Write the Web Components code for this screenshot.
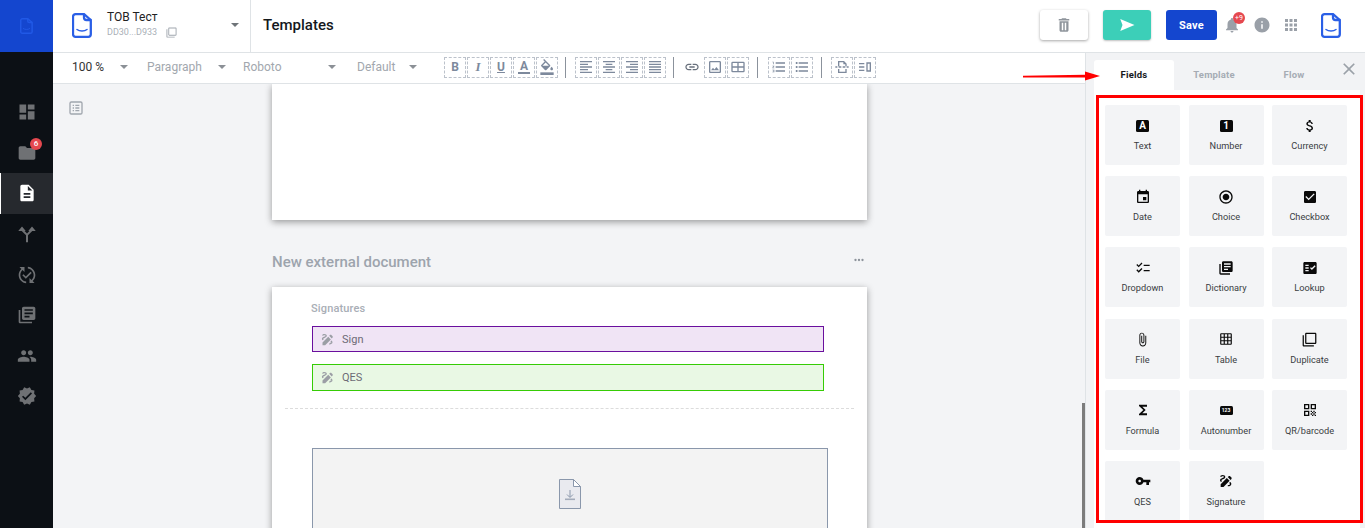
<!DOCTYPE html>
<html lang="en">
<head>
<meta charset="utf-8">
<title>Templates</title>
<style>
  html, body { margin: 0; padding: 0; height: 100%; overflow: hidden; }
  body { font-family: Roboto, "Liberation Sans", sans-serif; }
</style>
</head>
<body>
<app-shell>
  <app-sidebar slot="sidebar"></app-sidebar>
  <app-header slot="header" company="ТОВ Тест" code="DD30...D933" heading="Templates"></app-header>
  <format-toolbar slot="toolbar"></format-toolbar>
  <doc-canvas slot="canvas"></doc-canvas>
  <field-panel slot="panel">
    <field-tile><letter-badge slot="icon">A</letter-badge>Text</field-tile>
    <field-tile><letter-badge slot="icon">1</letter-badge>Number</field-tile>
    <field-tile><ui-icon slot="icon" name="money" size="16"></ui-icon>Currency</field-tile>
    <field-tile><ui-icon slot="icon" name="event" size="16"></ui-icon>Date</field-tile>
    <field-tile><ui-icon slot="icon" name="radio" size="16"></ui-icon>Choice</field-tile>
    <field-tile><ui-icon slot="icon" name="checkbox" size="16"></ui-icon>Checkbox</field-tile>
    <field-tile><ui-icon slot="icon" name="checklist" size="16"></ui-icon>Dropdown</field-tile>
    <field-tile><ui-icon slot="icon" name="library" size="16"></ui-icon>Dictionary</field-tile>
    <field-tile><ui-icon slot="icon" name="factcheck" size="16"></ui-icon>Lookup</field-tile>
    <field-tile><ui-icon slot="icon" name="attach" size="15"></ui-icon>File</field-tile>
    <field-tile><ui-icon slot="icon" name="grid" size="14"></ui-icon>Table</field-tile>
    <field-tile><ui-icon slot="icon" name="duplicate" size="15"></ui-icon>Duplicate</field-tile>
    <field-tile><ui-icon slot="icon" name="sigma" size="16"></ui-icon>Formula</field-tile>
    <field-tile><letter-badge slot="icon" wide>123</letter-badge>Autonumber</field-tile>
    <field-tile><ui-icon slot="icon" name="qr" size="16"></ui-icon>QR/barcode</field-tile>
    <field-tile><ui-icon slot="icon" name="key" size="16"></ui-icon>QES</field-tile>
    <field-tile><ui-icon slot="icon" name="sign" size="16"></ui-icon>Signature</field-tile>
  </field-panel>
</app-shell>

<script>
const ICONS = {
  dashboard: '<path d="M3 13h8V3H3v10zm0 8h8v-6H3v6zm10 0h8V11h-8v10zm0-18v6h8V3h-8z"/>',
  folder: '<path d="M10 4H4c-1.1 0-1.99.9-1.99 2L2 18c0 1.1.9 2 2 2h16c1.1 0 2-.9 2-2V8c0-1.1-.9-2-2-2h-8l-2-2z"/>',
  description: '<path d="M14 2H6c-1.1 0-1.99.9-1.99 2L4 20c0 1.1.89 2 1.99 2H18c1.1 0 2-.9 2-2V8l-6-6zm2 16H8v-2h8v2zm0-4H8v-2h8v2zm-3-5V3.5L18.5 9H13z"/>',
  split: '<path d="M12 22v-9L6.500 7.500M12 13l5.500-5.500" fill="none" stroke="currentColor" stroke-width="2.400"/><path d="M1.500 8.500 6 3l4.500 5.500zM13.500 8.500 18 3l4.500 5.500z"/>',
  sync: '<path d="M17.66 9.53l-7.07 7.07-4.24-4.24 1.41-1.41 2.83 2.83 5.66-5.66 1.41 1.41zM4 12c0-2.33 1.02-4.42 2.62-5.88L9 8.5v-6H3l2.2 2.2C3.24 6.52 2 9.11 2 12c0 5.19 3.95 9.45 9 9.95v-2.02c-3.94-.49-7-3.86-7-7.93zm18 0c0-5.19-3.95-9.45-9-9.95v2.02c3.94.49 7 3.86 7 7.93 0 2.33-1.02 4.42-2.62 5.88L15 15.5v6h6l-2.2-2.2c1.96-1.82 3.2-4.41 3.2-7.3z"/>',
  library: '<path d="M4 6H2v14c0 1.1.9 2 2 2h14v-2H4V6zm16-4H8c-1.1 0-2 .9-2 2v12c0 1.1.9 2 2 2h12c1.1 0 2-.9 2-2V4c0-1.1-.9-2-2-2zm-1 9H9V9h10v2zm-4 4H9v-2h6v2zm4-8H9V5h10v2z"/>',
  people: '<path d="M16 11c1.66 0 2.99-1.34 2.99-3S17.66 5 16 5c-1.66 0-3 1.34-3 3s1.34 3 3 3zm-8 0c1.66 0 2.99-1.34 2.99-3S9.66 5 8 5C6.34 5 5 6.34 5 8s1.34 3 3 3zm0 2c-2.33 0-7 1.17-7 3.5V19h14v-2.5c0-2.33-4.67-3.5-7-3.5zm8 0c-.29 0-.62.02-.97.05 1.16.84 1.97 1.97 1.97 3.45V19h6v-2.5c0-2.33-4.67-3.5-7-3.5z"/>',
  verified: '<path d="M23 12l-2.44-2.78.34-3.68-3.61-.82-1.89-3.18L12 3 8.6 1.54 6.71 4.72l-3.61.81.34 3.68L1 12l2.44 2.78-.34 3.69 3.61.82 1.89 3.18L12 21l3.4 1.46 1.89-3.18 3.61-.82-.34-3.68L23 12zm-13 5l-4-4 1.41-1.41L10 14.17l6.59-6.59L18 9l-8 8z"/>',
  trash: '<path fill-rule="evenodd" d="M6 19c0 1.1.9 2 2 2h8c1.1 0 2-.9 2-2V7H6v12zm3-10h2v10H9V9zm4 0h2v10h-2V9zM19 4h-3.5l-1-1h-5l-1 1H5v2h14V4z"/>',
  send: '<path d="M3 4l19 8-19 8 3-8z"/>',
  bell: '<path d="M12 22c1.1 0 2-.9 2-2h-4c0 1.1.89 2 2 2zm6-6v-5c0-3.07-1.64-5.64-4.5-6.32V4c0-.83-.67-1.5-1.5-1.5s-1.5.67-1.5 1.5v.68C7.63 5.36 6 7.92 6 11v5l-2 2v1h16v-1l-2-2z"/>',
  info: '<path d="M12 2C6.48 2 2 6.48 2 12s4.48 10 10 10 10-4.48 10-10S17.52 2 12 2zm1 15h-2v-6h2v6zm0-8h-2V7h2v2z"/>',
  apps: '<path d="M4 8h4V4H4v4zm6 12h4v-4h-4v4zm-6 0h4v-4H4v4zm0-6h4v-4H4v4zm6 0h4v-4h-4v4zm6-10v4h4V4h-4zm-6 4h4V4h-4v4zm6 6h4v-4h-4v4zm0 6h4v-4h-4v4z"/>',
  copy: '<path d="M3 5H1v16c0 1.1.9 2 2 2h16v-2H3V5zm18-4H7c-1.1 0-2 .9-2 2v14c0 1.1.9 2 2 2h14c1.1 0 2-.9 2-2V3c0-1.1-.9-2-2-2zm0 16H7V3h14v14z"/>',
  duplicate: '<path d="M3 5H1v16c0 1.1.9 2 2 2h16v-2H3V5zm18-4H7c-1.1 0-2 .9-2 2v14c0 1.1.9 2 2 2h14c1.1 0 2-.9 2-2V3c0-1.1-.9-2-2-2zm0 16H7V3h14v14z"/>',
  close: '<path d="M19 6.41L17.59 5 12 10.59 6.41 5 5 6.41 10.59 12 5 17.59 6.41 19 12 13.41 17.59 19 19 17.59 13.41 12z"/>',
  listbox: '<path fill-rule="evenodd" d="M5 2h14a3 3 0 0 1 3 3v14a3 3 0 0 1-3 3H5a3 3 0 0 1-3-3V5a3 3 0 0 1 3-3zm0 2a1 1 0 0 0-1 1v14a1 1 0 0 0 1 1h14a1 1 0 0 0 1-1V5a1 1 0 0 0-1-1H5zm2 3h2v2H7V7zm4 0h6v2h-6V7zm-4 4h2v2H7v-2zm4 0h6v2h-6v-2zm-4 4h2v2H7v-2zm4 0h6v2h-6v-2z"/>',
  dots: '<path d="M6 10a2 2 0 1 0 0 4 2 2 0 0 0 0-4zm12 0a2 2 0 1 0 0 4 2 2 0 0 0 0-4zm-6 0a2 2 0 1 0 0 4 2 2 0 0 0 0-4z"/>',
  fill: '<path d="M16.56 8.94L7.62 0 6.21 1.41l2.38 2.38-5.15 5.15c-.59.59-.59 1.54 0 2.12l5.5 5.5c.29.29.68.44 1.06.44s.77-.15 1.06-.44l5.5-5.5c.59-.58.59-1.53 0-2.12zM5.21 10L10 5.21 14.79 10H5.21zM19 11.5s-2 2.17-2 3.5c0 1.1.9 2 2 2s2-.9 2-2c0-1.33-2-3.5-2-3.5z"/><path d="M2 20h20v4H2z"/>',
  left: '<path d="M15 15H3v2h12v-2zm0-8H3v2h12V7zM3 13h18v-2H3v2zm0 8h18v-2H3v2zM3 3v2h18V3H3z"/>',
  center: '<path d="M7 15v2h10v-2H7zm-4 6h18v-2H3v2zm0-8h18v-2H3v2zm4-6v2h10V7H7zM3 3v2h18V3H3z"/>',
  right: '<path d="M3 21h18v-2H3v2zm6-4h12v-2H9v2zm-6-4h18v-2H3v2zm6-4h12V7H9v2zM3 3v2h18V3H3z"/>',
  justify: '<path d="M3 21h18v-2H3v2zm0-4h18v-2H3v2zm0-4h18v-2H3v2zm0-4h18V7H3v2zm0-6v2h18V3H3z"/>',
  link: '<path d="M3.9 12c0-1.71 1.39-3.1 3.1-3.1h4V7H7c-2.76 0-5 2.24-5 5s2.24 5 5 5h4v-1.9H7c-1.71 0-3.1-1.39-3.1-3.1zM8 13h8v-2H8v2zm9-6h-4v1.9h4c1.71 0 3.1 1.39 3.1 3.1s-1.39 3.1-3.1 3.1h-4V17h4c2.76 0 5-2.24 5-5s-2.24-5-5-5z"/>',
  image: '<path d="M19 5v14H5V5h14m0-2H5c-1.1 0-2 .9-2 2v14c0 1.1.9 2 2 2h14c1.1 0 2-.9 2-2V5c0-1.1-.9-2-2-2zm-4.86 8.86l-3 3.87L9 13.14 6 17h12l-3.86-5.14z"/>',
  tablebox: '<path fill-rule="evenodd" d="M4 4h16a2 2 0 0 1 2 2v12a2 2 0 0 1-2 2H4a2 2 0 0 1-2-2V6a2 2 0 0 1 2-2zm0 2v5h7V6H4zm9 0v5h7V6h-7zM4 13v5h7v-5H4zm9 0v5h7v-5h-7z"/>',
  ordered: '<path d="M2 17h2v.5H3v1h1v.5H2v1h3v-4H2v1zm1-9h1V4H2v1h1v3zm-1 3h1.8L2 13.1v.9h3v-1H3.2L5 10.9V10H2v1zm5-6v2h14V5H7zm0 14h14v-2H7v2zm0-6h14v-2H7v2z"/>',
  bullets: '<path d="M4 10.5c-.83 0-1.5.67-1.5 1.5s.67 1.5 1.5 1.5 1.5-.67 1.5-1.5-.67-1.5-1.5-1.5zm0-6c-.83 0-1.5.67-1.5 1.5S3.17 7.5 4 7.5 5.5 6.83 5.5 6 4.83 4.5 4 4.5zm0 12c-.83 0-1.5.68-1.5 1.5s.68 1.5 1.5 1.5 1.5-.68 1.5-1.5-.67-1.5-1.5-1.5zM7 19h14v-2H7v2zm0-6h14v-2H7v2zm0-8v2h14V5H7z"/>',
  pagebreak: '<path d="M6 3h9l4 4v4h-2V8h-3V5H8v6H6V3zM2 11h3v2H2v-2zm5 0h4v2H7v-2zm6 0h4v2h-4v-2zm6 0h3v2h-3v-2zM6 15h2v4h9v-4h2v6H6v-6z"/>',
  inline: '<path d="M3 6h8v2H3V6zm0 5h8v2H3v-2zm0 5h8v2H3v-2zM14 5h7v14h-7V5zm2 2v10h3V7h-3z"/>',
  money: '<path d="M11.8 10.9c-2.27-.59-3-1.2-3-2.15 0-1.09 1.01-1.85 2.7-1.85 1.78 0 2.44.85 2.5 2.1h2.21c-.07-1.72-1.12-3.3-3.21-3.81V3h-3v2.16c-1.94.42-3.5 1.68-3.5 3.61 0 2.31 1.91 3.46 4.7 4.13 2.5.6 3 1.48 3 2.41 0 .69-.49 1.79-2.7 1.79-2.06 0-2.87-.92-2.98-2.1h-2.2c.12 2.19 1.76 3.42 3.68 3.83V21h3v-2.15c1.95-.37 3.5-1.5 3.5-3.55 0-2.84-2.43-3.81-4.7-4.4z"/>',
  event: '<path d="M17 12h-5v5h5v-5zM16 1v2H8V1H6v2H5c-1.11 0-1.99.9-1.99 2L3 19c0 1.1.89 2 2 2h14c1.1 0 2-.9 2-2V5c0-1.1-.9-2-2-2h-1V1h-2zm3 18H5V8h14v11z"/>',
  radio: '<path d="M12 7c-2.76 0-5 2.24-5 5s2.24 5 5 5 5-2.24 5-5-2.24-5-5-5zm0-5C6.48 2 2 6.48 2 12s4.48 10 10 10 10-4.48 10-10S17.52 2 12 2zm0 18c-4.42 0-8-3.58-8-8s3.58-8 8-8 8 3.58 8 8-3.58 8-8 8z"/>',
  checkbox: '<path d="M19 3H5c-1.11 0-2 .9-2 2v14c0 1.1.89 2 2 2h14c1.11 0 2-.9 2-2V5c0-1.1-.89-2-2-2zm-9 14l-5-5 1.41-1.41L10 14.17l7.59-7.59L19 8l-9 9z"/>',
  checklist: '<path d="M22 7h-9v2h9V7zm0 8h-9v2h9v-2zM5.54 11 2 7.46l1.41-1.41 2.12 2.12 4.24-4.24 1.41 1.41L5.54 11zm0 8L2 15.46l1.41-1.41 2.12 2.12 4.24-4.24 1.41 1.41L5.54 19z"/>',
  factcheck: '<path d="M20 3H4c-1.1 0-2 .9-2 2v14c0 1.1.9 2 2 2h16c1.1 0 2-.9 2-2V5c0-1.1-.9-2-2-2zM10 17H5v-2h5v2zm0-4H5v-2h5v2zm0-4H5V7h5v2zm4.82 6L12 12.16l1.41-1.41 1.41 1.42L18.99 8l1.42 1.42L14.82 15z"/>',
  attach: '<path d="M16.5 6v11.5c0 2.21-1.79 4-4 4s-4-1.79-4-4V5c0-1.38 1.12-2.5 2.5-2.5s2.5 1.12 2.5 2.5v10.5c0 .55-.45 1-1 1s-1-.45-1-1V6H10v9.5c0 1.38 1.12 2.5 2.5 2.5s2.5-1.12 2.5-2.5V5c0-2.21-1.79-4-4-4S7 2.79 7 5v12.5c0 3.04 2.46 5.5 5.5 5.5s5.5-2.46 5.5-5.5V6h-1.5z"/>',
  grid: '<path d="M20 2H4c-1.1 0-2 .9-2 2v16c0 1.1.9 2 2 2h16c1.1 0 2-.9 2-2V4c0-1.1-.9-2-2-2zM8 20H4v-4h4v4zm0-6H4v-4h4v4zm0-6H4V4h4v4zm6 12h-4v-4h4v4zm0-6h-4v-4h4v4zm0-6h-4V4h4v4zm6 12h-4v-4h4v4zm0-6h-4v-4h4v4zm0-6h-4V4h4v4z"/>',
  sigma: '<path d="M18 4H6v2l6.5 6L6 18v2h12v-3h-7l5-5-5-5h7z"/>',
  qr: '<path d="M3 11h8V3H3v8zm2-6h4v4H5V5zM3 21h8v-8H3v8zm2-6h4v4H5v-4zM13 3v8h8V3h-8zm6 6h-4V5h4v4zM19 19h2v2h-2zM13 13h2v2h-2zM15 15h2v2h-2zM13 17h2v2h-2zM15 19h2v2h-2zM17 17h2v2h-2zM17 13h2v2h-2zM19 15h2v2h-2z"/>',
  key: '<path d="M12.65 10C11.83 7.67 9.61 6 7 6c-3.31 0-6 2.69-6 6s2.69 6 6 6c2.61 0 4.83-1.67 5.65-4H17v4h4v-4h2v-4H12.65zM7 14c-1.1 0-2-.9-2-2s.9-2 2-2 2 .9 2 2-.9 2-2 2z"/>',
  sign: '<path d="M18.85 10.39l1.06-1.06c.78-.78.78-2.05 0-2.83L18.5 5.09c-.78-.78-2.05-.78-2.83 0l-1.06 1.06 4.24 4.24zm-5.66-2.83L4 16.76V21h4.24l9.19-9.19-4.24-4.25zm6.81 8.94c0 2.19-2.54 3.5-4.5 3.5-.55 0-1-.45-1-1s.45-1 1-1c1.54 0 2.5-.79 2.5-1.5 0-.48-.51-.94-1.35-1.34l1.48-1.48c1.07.63 1.87 1.47 1.87 2.82zM4.58 13.35C3.61 12.79 3 12.06 3 11c0-1.8 1.89-2.63 3.56-3.36C7.59 7.18 9 6.56 9 6c0-.41-.78-1-2-1-1.26 0-1.8.61-1.83.64-.35.41-.98.46-1.4.12-.41-.34-.49-.95-.15-1.38C3.73 4.23 4.67 3 7 3s4 1.37 4 3c0 1.87-1.93 2.72-3.64 3.47C6.42 9.88 5 10.5 5 11c0 .31.43.6 1.07.86l-1.49 1.49z"/>'
};

class UiIcon extends HTMLElement {
  constructor() {
    super();
    this.attachShadow({mode: "open"});
  }
  connectedCallback() {
    const size = this.getAttribute("size") || 18;
    const name = this.getAttribute("name");
    this.shadowRoot.innerHTML = `
      <style>
        :host { display: inline-flex; width: ${size}px; height: ${size}px; flex: none; }
        svg { display: block; width: 100%; height: 100%; fill: currentColor; }
      </style>
      <svg viewBox="0 0 24 24">${ICONS[name] || ""}</svg>`;
  }
}

class AppLogo extends HTMLElement {
  constructor() {
    super();
    this.attachShadow({mode: "open"});
    this.shadowRoot.innerHTML = `
      <style>
        :host { display: block; width: 20px; height: 25px; flex: none; color: #2a5fe6; }
        svg { display: block; width: 100%; height: 100%; }
      </style>
      <svg viewBox="0 0 20 25" fill="none" stroke="currentColor">
        <path d="M3.5 1.2h8.500v3.300a2.500 2.500 0 0 0 2.500 2.500h4.300v14.300a2.500 2.500 0 0 1-2.500 2.500h-12.800a2.500 2.500 0 0 1-2.500-2.500v-17.600a2.500 2.500 0 0 1 2.500-2.500z" stroke-width="2.300" stroke-linejoin="round"/>
        <path d="M12 1.200l6.800 5.800" stroke-width="2.300"/>
        <path d="M5 16.500c2.500 2 7.500 2 10 0" stroke-width="1.500" stroke-linecap="round"/>
      </svg>`;
  }
}

class AppSidebar extends HTMLElement {
  constructor() {
    super();
    this.attachShadow({mode: "open"});
    const items = ["dashboard", "folder", "description", "split", "sync", "library", "people", "verified"];
    const rows = items.map((name) => {
      const active = name === "description" ? " active" : "";
      const badge = name === "folder" ? '<span class="badge">6</span>' : "";
      return `<div class="item${active}"><ui-icon name="${name}" size="20"></ui-icon>${badge}</div>`;
    }).join("");
    this.shadowRoot.innerHTML = `
      <style>
        :host { display: block; height: 100%; background: #0c1015; color: #6f7174; }
        .brand { height: 52px; background: #1446cf; display: flex; align-items: center; justify-content: center; }
        .brand app-logo { width: 13px; height: 16px; color: #2159e6; }
        .nav { padding-top: 40px; }
        .item { position: relative; height: 40.6px; display: flex; align-items: center; justify-content: center; box-sizing: border-box; }
        .item.active { background: #26292e; color: #fff; border-left: 1px solid #fff; }
        .badge {
          position: absolute; left: 30px; top: 5px; width: 12px; height: 12px; border-radius: 50%;
          background: #e5484f; color: #fff; font: 500 8px/12px Roboto, sans-serif; text-align: center;
        }
      </style>
      <div class="brand"><app-logo></app-logo></div>
      <div class="nav">${rows}</div>`;
  }
}

class AppHeader extends HTMLElement {
  constructor() {
    super();
    this.attachShadow({mode: "open"});
  }
  connectedCallback() {
    this.shadowRoot.innerHTML = `
      <style>
        :host { display: flex; align-items: stretch; height: 53px; box-sizing: border-box; background: #fff; border-bottom: 1px solid #dfe3e6; font-family: Roboto, sans-serif; }
        .company { width: 198px; box-sizing: border-box; border-right: 1px solid #dfe3e6; display: flex; align-items: center; padding-left: 19px; position: relative; }
        .company app-logo { margin-top: -2px; }
        .who { margin: -4px 0 0 15px; }
        .name { font-size: 12px; line-height: 15px; color: #222; }
        .code { display: flex; align-items: center; font-size: 9px; line-height: 13px; color: #a9afb7; margin-top: 1px; }
        .code ui-icon { margin-left: 9px; color: #a0a6ae; }
        .caret { position: absolute; left: 178px; top: 23px; width: 0; height: 0; border: 4px solid transparent; border-top: 4px solid #6f7479; border-bottom: 0; }
        h1 { margin: -2px 0 0 12px; font-size: 15px; font-weight: 500; color: #14181c; align-self: center; }
        .actions { margin-left: auto; display: flex; align-items: center; padding: 0 24px 2px 0; color: #9aa0a8; }
        button { border: 0; height: 30px; border-radius: 3px; display: flex; align-items: center; justify-content: center; padding: 0; font-family: inherit; }
        .del { width: 48px; background: #fff; color: #8f959c; box-shadow: 0 1px 3px rgba(0,0,0,.35); }
        .send { width: 48px; background: #3ccfb8; color: #fff; margin-left: 15px; box-shadow: 0 1px 2px rgba(0,0,0,.25); }
        .save { width: 51px; background: #1446cf; color: #fff; margin-left: 15px; font-size: 11px; font-weight: 700; letter-spacing: .3px; }
        .bell { position: relative; margin-left: 6px; display: flex; }
        .count { position: absolute; left: 10px; top: -4px; width: 12px; height: 12px; border-radius: 50%; background: #e5484f; color: #fff; font-size: 7px; line-height: 12px; text-align: center; }
        .info { margin-left: 12px; display: flex; }
        .apps { margin-left: 11px; display: flex; }
        .actions app-logo { margin-left: 21px; }
      </style>
      <div class="company">
        <app-logo></app-logo>
        <div class="who">
          <div class="name">${this.getAttribute("company")}</div>
          <div class="code">${this.getAttribute("code")}<ui-icon name="copy" size="11"></ui-icon></div>
        </div>
        <span class="caret"></span>
      </div>
      <h1>${this.getAttribute("heading")}</h1>
      <div class="actions">
        <button class="del"><ui-icon name="trash" size="18"></ui-icon></button>
        <button class="send"><ui-icon name="send" size="18"></ui-icon></button>
        <button class="save">Save</button>
        <div class="bell"><ui-icon name="bell" size="18"></ui-icon><span class="count">+9</span></div>
        <div class="info"><ui-icon name="info" size="18"></ui-icon></div>
        <div class="apps"><ui-icon name="apps" size="18"></ui-icon></div>
        <app-logo></app-logo>
      </div>`;
  }
}

class ToolBtn extends HTMLElement {
  constructor() {
    super();
    this.attachShadow({mode: "open"});
    this.shadowRoot.innerHTML = `
      <style>
        :host {
          display: flex; align-items: center; justify-content: center; flex: none;
          width: 22px; height: 21px; box-sizing: border-box; margin-right: 1px;
          border: 1px dashed #bcc2cb; color: #7d899c;
          font: 700 12px Roboto, sans-serif;
        }
        :host([plain]) { border-color: transparent; color: #68707c; }
        ::slotted(ui-icon) { display: block; }
      </style>
      <slot></slot>`;
  }
}

class FormatToolbar extends HTMLElement {
  constructor() {
    super();
    this.attachShadow({mode: "open"});
    const icon = (n, extra) => `<tool-btn ${extra || ""}><ui-icon name="${n}" size="16"></ui-icon></tool-btn>`;
    this.shadowRoot.innerHTML = `
      <style>
        :host { display: flex; align-items: center; height: 31px; box-sizing: border-box; padding-bottom: 2px; background: #fff; border-bottom: 1px solid #dfe3e6; font: 12px Roboto, sans-serif; color: #a2a7ae; }
        .sel { display: flex; align-items: center; }
        .caret { width: 0; height: 0; border: 4px solid transparent; border-top: 4px solid #8b9096; border-bottom: 0; }
        .zoom { color: #333; margin-left: 19px; width: 75px; }
        .zoom .caret { margin-left: 16px; }
        .para { width: 96px; } .para .caret { margin-left: 16px; }
        .font { width: 114px; } .font .caret { margin-left: 47px; }
        .def { width: 87px; } .def .caret { margin-left: 14px; }
        .sep { width: 1px; height: 21px; background: #8b929c; flex: none; }
        .s1 { margin: 0 9px 0 6px; } .s2 { margin: 0 7px 0 6px; } .s3 { margin: 0 10px 0 7px; } .s4 { margin: 0 9px 0 7px; }
        .u { text-decoration: underline; }
        .i { font-style: italic; font-family: "Liberation Serif", serif; font-size: 13px; }
        .under { border-bottom: 2px solid #7d899c; line-height: 11px; padding: 0 2px; }
      </style>
      <div class="sel zoom">100 %<span class="caret"></span></div>
      <div class="sel para">Paragraph<span class="caret"></span></div>
      <div class="sel font">Roboto<span class="caret"></span></div>
      <div class="sel def">Default<span class="caret"></span></div>
      <tool-btn>B</tool-btn>
      <tool-btn><span class="i">I</span></tool-btn>
      <tool-btn><span class="u">U</span></tool-btn>
      <tool-btn><span class="under">A</span></tool-btn>
      ${icon("fill")}
      <span class="sep s1"></span>
      ${icon("left")}${icon("center")}${icon("right")}${icon("justify")}
      <span class="sep s2"></span>
      ${icon("link", "plain")}${icon("image")}${icon("tablebox")}
      <span class="sep s3"></span>
      ${icon("ordered")}${icon("bullets")}
      <span class="sep s4"></span>
      ${icon("pagebreak")}${icon("inline")}`;
  }
}

class SignField extends HTMLElement {
  constructor() {
    super();
    this.attachShadow({mode: "open"});
    this.shadowRoot.innerHTML = `
      <style>
        :host {
          display: flex; align-items: center; box-sizing: border-box; width: 512px; height: 26px;
          padding-left: 7px; border: 1px solid var(--edge); background: var(--tint);
          font: 11px Roboto, sans-serif; color: #6d6a75;
        }
        ui-icon { color: #9b9ea5; margin-right: 7px; }
      </style>
      <ui-icon name="sign" size="15"></ui-icon><slot></slot>`;
  }
}

class DocCanvas extends HTMLElement {
  constructor() {
    super();
    this.attachShadow({mode: "open"});
    this.shadowRoot.innerHTML = `
      <style>
        :host { display: grid; grid-template-columns: 219px 595px 1fr; height: 100%; overflow: hidden; position: relative; background: #f3f4f6; font-family: Roboto, sans-serif; }
        .side { padding: 16px 0 0 15px; color: #a0a6ae; }
        .sheet { background: #fff; box-shadow: 0 2px 7px rgba(0,0,0,.38); }
        .first { height: 136px; }
        .title { display: flex; align-items: center; justify-content: space-between; height: 67px; box-sizing: border-box; padding-top: 17px; font-size: 15px; font-weight: 500; color: #9da4ad; }
        .title ui-icon { color: #8d939b; margin-right: 1px; margin-top: -4px; }
        .second { height: 300px; padding: 15px 0 0 39px; box-sizing: border-box; }
        .label { font-size: 11px; font-weight: 500; line-height: 13px; color: #a9aeb6; letter-spacing: .15px; }
        sign-field { margin-left: 1px; }
        .sign { --edge: #6a0f9e; --tint: #f0e4f5; margin-top: 11px; }
        .qes { --edge: #36cc05; --tint: #e9f8e4; margin-top: 12px; height: 27px; }
        hr { border: 0; border-top: 1px dashed #dcdcdc; margin: 17px 13px 0 -26px; }
        .drop { margin: 39px 0 0 1px; width: 516px; height: 200px; box-sizing: border-box; border: 1px solid #8a97ab; background: #f3f3f3; display: flex; justify-content: center; padding-top: 30px; }
        .drop svg { display: block; width: 22px; height: 30px; }
        .bar { position: absolute; right: 0; top: 319px; width: 3px; height: 125px; background: #7c7c7c; }
      </style>
      <div class="side"><ui-icon name="listbox" size="16"></ui-icon></div>
      <div class="col">
        <div class="sheet first"></div>
        <div class="title">New external document<ui-icon name="dots" size="14"></ui-icon></div>
        <div class="sheet second">
          <div class="label">Signatures</div>
          <sign-field class="sign">Sign</sign-field>
          <sign-field class="qes">QES</sign-field>
          <hr>
          <div class="drop">
            <svg viewBox="0 0 22 30">
              <path d="M.5.5h14l7 7v22h-21z" fill="#e9eaef" stroke="#8a97ab"/>
              <path d="M14.5.5v7h7z" fill="#fff" stroke="#8a97ab"/>
              <path d="M11 11v7M8 15.5l3 3 3-3" fill="none" stroke="#8a97ab"/>
              <rect x="6" y="19.5" width="10" height="1.6" fill="#a3abba"/>
            </svg>
          </div>
        </div>
      </div>
      <div></div>
      <div class="bar"></div>`;
  }
}

class LetterBadge extends HTMLElement {
  constructor() {
    super();
    this.attachShadow({mode: "open"});
    this.shadowRoot.innerHTML = `
      <style>
        :host {
          display: flex; align-items: center; justify-content: center;
          width: 13px; height: 12px; border-radius: 1.5px;
          background: #0a0a0a; color: #fff; font: 700 10px/12px Roboto, sans-serif;
        }
        :host([wide]) { height: 9px; font-size: 5px; line-height: 9px; }
      </style>
      <slot></slot>`;
  }
}

class FieldTile extends HTMLElement {
  constructor() {
    super();
    this.attachShadow({mode: "open"});
    this.shadowRoot.innerHTML = `
      <style>
        :host {
          display: flex; flex-direction: column; align-items: center; box-sizing: border-box;
          height: 60px; padding-top: 11.5px; border-radius: 2px; background: #f3f4f6;
          font: 9.2px/12px Roboto, sans-serif; color: #3a3d42;
        }
        .icon { display: flex; align-items: center; justify-content: center; height: 18px; color: #0a0a0a; margin-bottom: 5.5px; }
      </style>
      <div class="icon"><slot name="icon"></slot></div>
      <div class="label"><slot></slot></div>`;
  }
}

class FieldPanel extends HTMLElement {
  constructor() {
    super();
    this.attachShadow({mode: "open"});
    this.shadowRoot.innerHTML = `
      <style>
        :host { display: block; position: relative; height: 100%; box-sizing: border-box; overflow: hidden; border-left: 1px solid #dfe3e6; background: #f2f3f5; padding: 7px 0 0 8px; font-family: Roboto, sans-serif; }
        .tabs { display: flex; align-items: stretch; height: 30px; }
        .tab { width: 80px; box-sizing: border-box; padding-bottom: 2px; display: flex; align-items: center; justify-content: center; font-size: 9.5px; font-weight: 700; color: #a6acb4; letter-spacing: .2px; }
        .tab.on { background: #fff; color: #16191d; border-radius: 3px 3px 0 0; }
        .close { margin-left: auto; margin-right: 6px; margin-top: -1px; color: #9ba1a8; }
        .body { width: 266px; height: 438px; box-sizing: border-box; background: #fff; padding: 15px 0 0 11px; display: grid; grid-template-columns: repeat(3, 75px); column-gap: 8.5px; row-gap: 11.2px; align-content: start; }
        .mark { position: absolute; left: 10px; top: 42px; width: 267px; height: 428px; box-sizing: border-box; border: 3px solid #f00; pointer-events: none; }
      </style>
      <div class="tabs">
        <div class="tab on">Fields</div>
        <div class="tab">Template</div>
        <div class="tab">Flow</div>
        <ui-icon class="close" name="close" size="20"></ui-icon>
      </div>
      <div class="body"><slot></slot></div>
      <div class="mark"></div>`;
  }
}

class AppShell extends HTMLElement {
  constructor() {
    super();
    this.attachShadow({mode: "open"});
    this.shadowRoot.innerHTML = `
      <style>
        :host { display: grid; position: relative; width: 1365px; height: 528px; overflow: hidden; grid-template-columns: 53px 1032px 280px; grid-template-rows: 53px 31px 1fr; }
        .sidebar { grid-row: 1 / 4; grid-column: 1; min-height: 0; }
        .header { grid-row: 1; grid-column: 2 / 4; }
        .toolbar { grid-row: 2; grid-column: 2; }
        .canvas { grid-row: 3; grid-column: 2; min-height: 0; }
        .panel { grid-row: 2 / 4; grid-column: 3; min-height: 0; }
        svg { position: absolute; left: 1023px; top: 70px; width: 78px; height: 12px; }
      </style>
      <div class="sidebar"><slot name="sidebar"></slot></div>
      <div class="header"><slot name="header"></slot></div>
      <div class="toolbar"><slot name="toolbar"></slot></div>
      <div class="canvas"><slot name="canvas"></slot></div>
      <div class="panel"><slot name="panel"></slot></div>
      <svg viewBox="0 0 78 12"><path d="M0 5.8L62 4.7V1.500L77 6l-15 4.500V7.600L0 7.600z" fill="#f00"/></svg>`;
  }
}

customElements.define("ui-icon", UiIcon);
customElements.define("app-logo", AppLogo);
customElements.define("app-sidebar", AppSidebar);
customElements.define("app-header", AppHeader);
customElements.define("tool-btn", ToolBtn);
customElements.define("format-toolbar", FormatToolbar);
customElements.define("sign-field", SignField);
customElements.define("doc-canvas", DocCanvas);
customElements.define("letter-badge", LetterBadge);
customElements.define("field-tile", FieldTile);
customElements.define("field-panel", FieldPanel);
customElements.define("app-shell", AppShell);
</script>
</body>
</html>
